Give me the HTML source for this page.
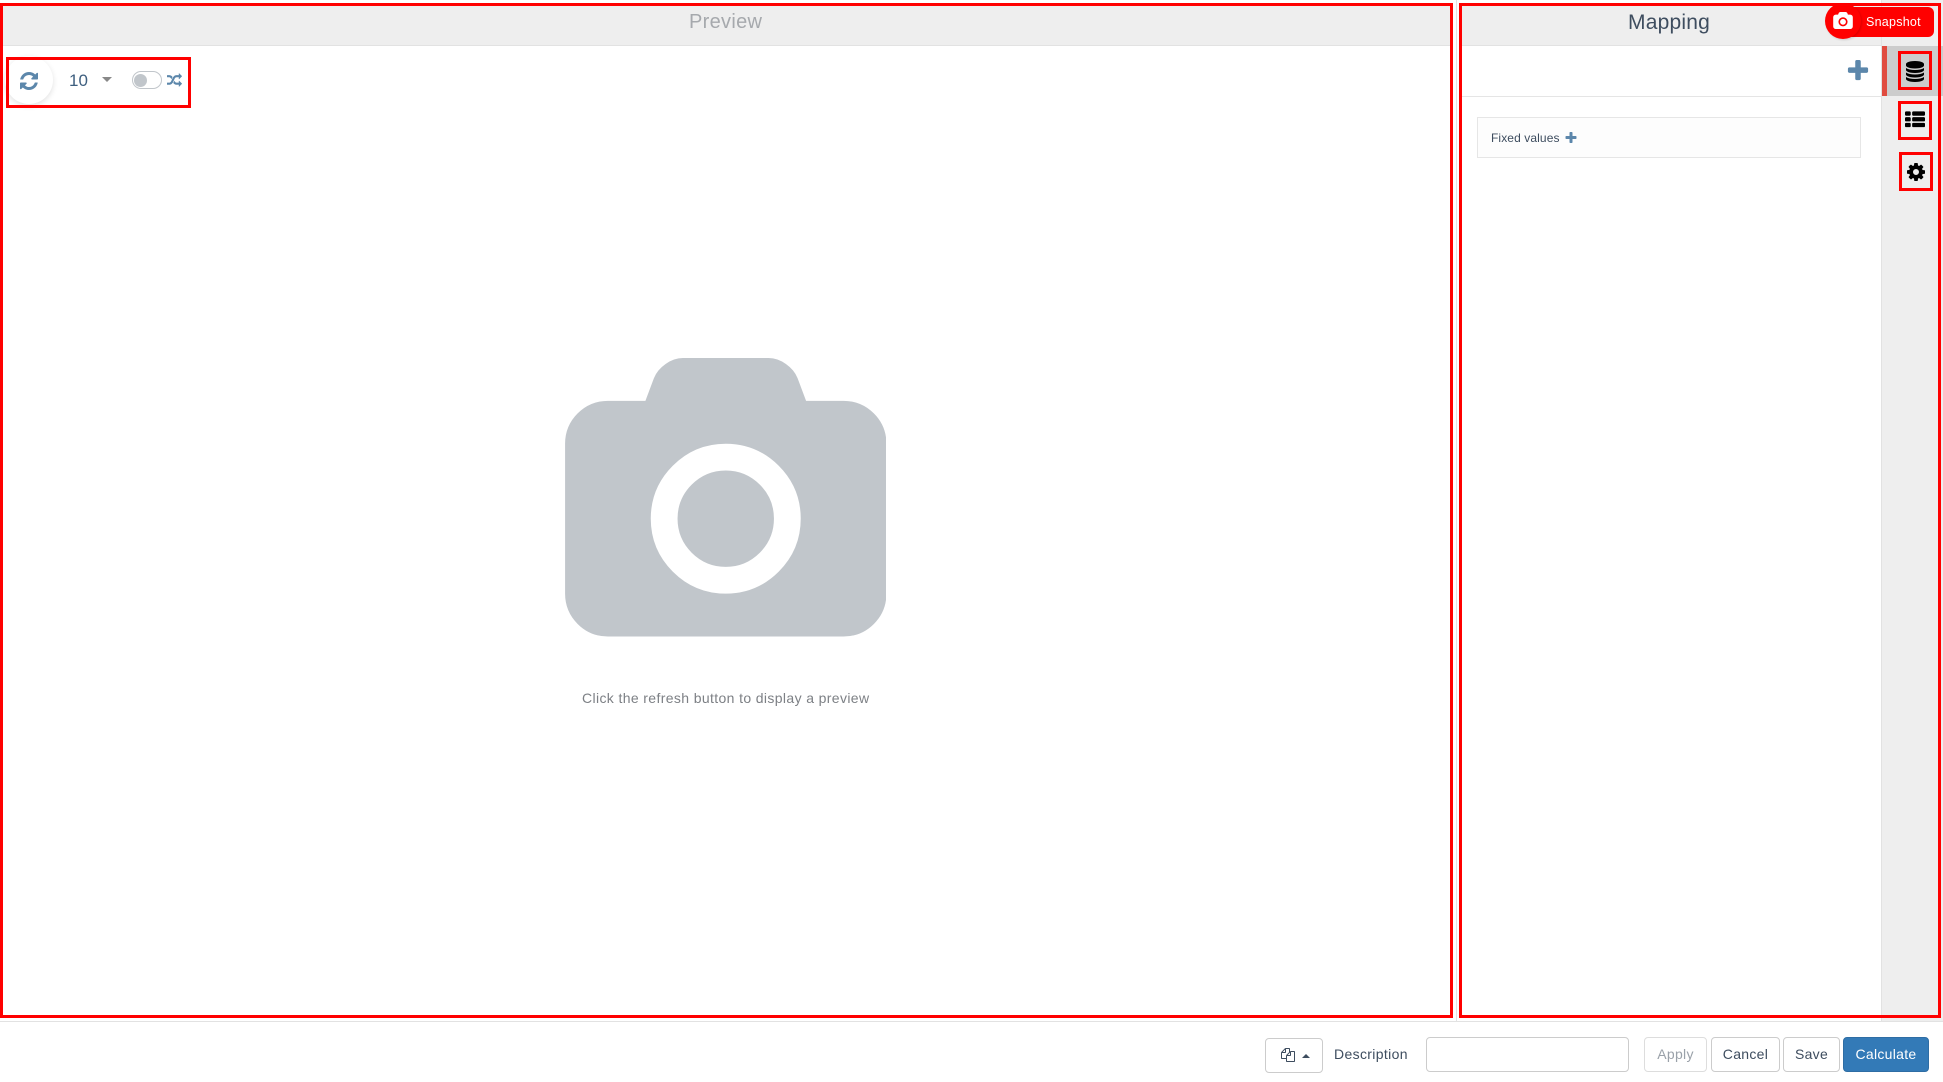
<!DOCTYPE html>
<html><head><meta charset="utf-8"><title>Preview and Mapping</title>
<style>
html,body{margin:0;padding:0;width:1943px;height:1082px;overflow:hidden;background:#fff;font-family:"Liberation Sans",sans-serif;color:#3e4d5f}
div,span,button,input,svg{position:absolute;box-sizing:border-box}
.t{white-space:nowrap;line-height:1}
.red{border:3px solid #f00;background:transparent}
.btn{background:#fff;border:1px solid #ccc;border-radius:4px;font:14px "Liberation Sans",sans-serif;color:#3e4d5f;padding:0 0 2px;top:1037px;height:35px;letter-spacing:.3px}
</style></head><body>

<!-- headers -->
<div style="left:3px;top:6px;width:1447px;height:40px;background:#eee;border-bottom:1px solid #e2e2e2"></div>
<div style="left:1462px;top:6px;width:420px;height:40px;background:#eee;border-bottom:1px solid #e2e2e2"></div>
<div class="t" style="left:689px;top:12px;font-size:20px;letter-spacing:.3px;color:#a6a9ad">Preview</div>
<div class="t" style="left:1628px;top:12px;font-size:21px;letter-spacing:.2px;color:#3e4d5f">Mapping</div>

<!-- preview toolbar -->
<div style="left:5px;top:56px;width:48px;height:48px;border-radius:50%;background:#fff;box-shadow:0 2px 6px rgba(0,0,0,.12)"></div>
<svg style="left:20px;top:72px" width="18" height="18" viewBox="128 128 1536 1536"><path fill="#5c87ab" d="M1639 1056q0 5-1 7-64 268-268 434.500t-478 166.500q-146 0-282.500-55t-243.500-157l-129 129q-19 19-45 19t-45-19-19-45v-448q0-26 19-45t45-19h448q26 0 45 19t19 45-19 45l-137 137q71 66 161 102t187 36q134 0 250-65t186-179q11-17 53-117 8-23 30-23h192q13 0 22.500 9.500t9.500 22.500zm25-800v448q0 26-19 45t-45 19h-448q-26 0-45-19t-19-45 19-45l138-138q-148-137-349-137-134 0-250 65t-186 179q-11 17-53 117-8 23-30 23h-199q-13 0-22.500-9.500t-9.500-22.500v-7q65-268 270-434.500t480-166.500q146 0 284 55.500t245 156.500l130-129q19-19 45-19t45 19 19 45z"/></svg>
<div class="t" style="left:69px;top:72px;font-size:17px;color:#3e5f7f">10</div>
<div style="left:102px;top:77px;width:0;height:0;border-left:5px solid transparent;border-right:5px solid transparent;border-top:5px solid #888"></div>
<div style="left:132px;top:71px;width:30px;height:18px;border-radius:9px;background:#fff;border:1px solid #c1c6cb"></div>
<div style="left:134px;top:73.500px;width:13px;height:13px;border-radius:50%;background:#c1c6cb"></div>
<svg style="left:167px;top:73px" width="15" height="15" viewBox="0 0 1792 1792"><path fill="#5c87ab" d="M666 481q-60 92-137 273-22-45-37-72.500t-40.500-63.500-51-56.500-63-35-81.500-14.500h-224q-14 0-23-9t-9-23v-192q0-14 9-23t23-9h224q250 0 410 225zm1126 799q0 14-9 23l-320 320q-9 9-23 9-13 0-22.500-9.500t-9.500-22.500v-192q-32 0-85 .5t-81 1-73-1-71-5-64-10.500-63-18.500-58-28.500-59-40-55-53.500-56-69.500q59-93 136-273 22 45 37 72.500t40.500 63.500 51 56.500 63 35 81.500 14.500h256v-192q0-14 9-23t23-9q12 0 24 10l319 319q9 9 9 23zm0-896q0 14-9 23l-320 320q-9 9-23 9-13 0-22.500-9.500t-9.500-22.500v-192h-256q-48 0-87 15t-69 45-51 61.500-45 77.500q-32 62-78 171-29 66-49.500 111t-54 105-64 100-74 83-90 68.500-106.500 42-128 16.500h-224q-14 0-23-9t-9-23v-192q0-14 9-23t23-9h224q48 0 87-15t69-45 51-61.500 45-77.500q32-62 78-171 29-66 49.500-111t54-105 64-100 74-83 90-68.500 106.500-42 128-16.500h256v-192q0-14 9-23t23-9q12 0 24 10l319 319q9 9 9 23z"/></svg>

<!-- preview placeholder -->
<svg style="left:564.500px;top:358px" width="321.500" height="278.500" viewBox="-64 0 1920 1664"><path fill="#c1c6cb" d="M896 672q119 0 203.500 84.500t84.500 203.500-84.500 203.500-203.500 84.500-203.500-84.500-84.500-203.500 84.500-203.500 203.500-84.500zm704-416q106 0 181 75t75 181v896q0 106-75 181t-181 75h-1408q-106 0-181-75t-75-181v-896q0-106 75-181t181-75h224l51-136q19-49 69.500-84.500t103.500-35.500h512q53 0 103.500 35.500t69.500 84.500l51 136h224zm-704 1152q185 0 316.500-131.500t131.500-316.500-131.500-316.500-316.500-131.500-316.500 131.500-131.500 316.500 131.500 316.500 316.500 131.500z"/></svg>
<div class="t" style="left:582px;top:691px;font-size:14px;letter-spacing:.37px;color:#7d8085">Click the refresh button to display a preview</div>

<!-- mapping panel -->
<div style="left:1462px;top:96px;width:420px;height:1px;background:#e5e5e5"></div>
<svg style="left:1847px;top:60px" width="22" height="22" viewBox="128 128 1536 1536"><path fill="#5c87ab" d="M1600 736v192q0 40-28 68t-68 28h-416v416q0 40-28 68t-68 28h-192q-40 0-68-28t-28-68v-416h-416q-40 0-68-28t-28-68v-192q0-40 28-68t68-28h416v-416q0-40 28-68t68-28h192q40 0 68 28t28 68v416h416q40 0 68 28t28 68z"/></svg>
<div style="left:1477px;top:117px;width:384px;height:41px;background:#fdfdfd;border:1px solid #e6e6e6"></div>
<div class="t" style="left:1491px;top:132px;font-size:12px;letter-spacing:.1px;color:#3e4d5f">Fixed values</div>
<svg style="left:1565px;top:132px" width="12" height="12" viewBox="128 128 1536 1536"><path fill="#5c87ab" d="M1600 736v192q0 40-28 68t-68 28h-416v416q0 40-28 68t-68 28h-192q-40 0-68-28t-28-68v-416h-416q-40 0-68-28t-28-68v-192q0-40 28-68t68-28h416v-416q0-40 28-68t68-28h192q40 0 68 28t28 68v416h416q40 0 68 28t28 68z"/></svg>

<!-- sidebar -->
<div style="left:1881px;top:0;width:62px;height:1022px;background:#eee;border-left:1px solid #e2e2e2"></div>
<div style="left:1882px;top:46px;width:61px;height:50px;background:#ccc;border-left:5px solid #e04b3f"></div>
<svg style="left:1906px;top:60.500px" width="18" height="21" viewBox="128 0 1536 1792"><path fill="#000" d="M896 768q237 0 443-43t325-127v170q0 69-103 128t-280 93.500-385 34.500-385-34.500-280-93.500-103-128v-170q119 84 325 127t443 43zm0 768q237 0 443-43t325-127v170q0 69-103 128t-280 93.500-385 34.500-385-34.500-280-93.500-103-128v-170q119 84 325 127t443 43zm0-384q237 0 443-43t325-127v170q0 69-103 128t-280 93.500-385 34.500-385-34.500-280-93.500-103-128v-170q119 84 325 127t443 43zm0-1152q208 0 385 34.500t280 93.500 103 128v128q0 69-103 128t-280 93.500-385 34.500-385-34.500-280-93.500-103-128v-128q0-69 103-128t280-93.500 385-34.500z"/></svg>
<svg style="left:1905px;top:110px" width="20" height="20" viewBox="0 0 1792 1792"><path fill="#000" d="M512 1248v192q0 40-28 68t-68 28h-320q-40 0-68-28t-28-68v-192q0-40 28-68t68-28h320q40 0 68 28t28 68zm0-512v192q0 40-28 68t-68 28h-320q-40 0-68-28t-28-68v-192q0-40 28-68t68-28h320q40 0 68 28t28 68zm1280 512v192q0 40-28 68t-68 28h-960q-40 0-68-28t-28-68v-192q0-40 28-68t68-28h960q40 0 68 28t28 68zm-1280-1024v192q0 40-28 68t-68 28h-320q-40 0-68-28t-28-68v-192q0-40 28-68t68-28h320q40 0 68 28t28 68zm1280 512v192q0 40-28 68t-68 28h-960q-40 0-68-28t-28-68v-192q0-40 28-68t68-28h960q40 0 68 28t28 68zm0-512v192q0 40-28 68t-68 28h-960q-40 0-68-28t-28-68v-192q0-40 28-68t68-28h960q40 0 68 28t28 68z"/></svg>
<svg style="left:1906.500px;top:163px" width="18" height="18" viewBox="128 128 1536 1536"><path fill="#000" d="M1152 896q0-106-75-181t-181-75-181 75-75 181 75 181 181 75 181-75 75-181zm512-109v222q0 12-8 23t-20 13l-185 28q-19 54-39 91 35 50 107 138 10 12 10 25t-9 23q-27 37-99 108t-94 71q-12 0-26-9l-138-108q-44 23-91 38-16 136-29 186-7 28-36 28h-222q-14 0-24.500-8.500t-11.500-21.500l-28-184q-49-16-90-37l-141 107q-10 9-25 9-14 0-25-11-126-114-165-168-7-10-7-23 0-12 8-23 15-21 51-66.500t54-70.500q-27-50-41-99l-183-27q-13-2-21-12.500t-8-23.500v-222q0-12 8-23t19-13l186-28q14-46 39-92-40-57-107-138-10-12-10-24 0-10 9-23 26-36 98.500-107.500t94.500-71.500q13 0 26 10l138 107q44-23 91-38 16-136 29-186 7-28 36-28h222q14 0 24.500 8.500t11.500 21.500l28 184q49 16 90 37l142-107q9-9 24-9 13 0 25 10 129 119 165 170 7 8 7 22 0 12-8 23-15 21-51 66.500t-54 70.500q26 50 41 98l183 28q13 2 21 12.500t8 23.500z"/></svg>

<!-- bottom divider -->
<div style="left:0;top:1021px;width:1943px;height:1px;background:#e2e2e2"></div>
<div style="left:1456px;top:0;width:1px;height:1022px;background:#e2e2e2"></div>

<!-- red annotation frames -->
<div class="red" style="left:0;top:3px;width:1453px;height:1015px"></div>
<div class="red" style="left:1459px;top:3px;width:482px;height:1015px"></div>
<div class="red" style="left:6px;top:57px;width:185px;height:51px"></div>
<div class="red" style="left:1898px;top:51px;width:34px;height:39px"></div>
<div class="red" style="left:1898px;top:101px;width:34px;height:39px"></div>
<div class="red" style="left:1899px;top:152px;width:34px;height:39px"></div>

<!-- snapshot -->
<div style="left:1843px;top:7px;width:91px;height:30px;background:#f00;border-radius:6px"></div>
<div style="left:1825px;top:3px;width:36px;height:36px;border-radius:50%;background:#f00;box-shadow:1px 1px 2px rgba(0,0,0,.15)"></div>
<svg style="left:1833px;top:12px" width="20" height="17" viewBox="-64 0 1920 1664"><path fill="#fff" d="M896 672q119 0 203.500 84.500t84.500 203.500-84.500 203.500-203.500 84.500-203.500-84.500-84.500-203.500 84.500-203.500 203.500-84.500zm704-416q106 0 181 75t75 181v896q0 106-75 181t-181 75h-1408q-106 0-181-75t-75-181v-896q0-106 75-181t181-75h224l51-136q19-49 69.500-84.500t103.500-35.500h512q53 0 103.500 35.500t69.500 84.500l51 136h224zm-704 1152q185 0 316.500-131.500t131.500-316.500-131.500-316.500-316.500-131.500-316.500 131.500-131.500 316.500 131.500 316.500 316.500 131.500z"/></svg>
<div class="t" style="left:1866px;top:16px;font-size:12.500px;letter-spacing:.25px;color:#fff">Snapshot</div>

<!-- footer -->
<button class="btn" style="left:1265px;top:1038px;width:58px"></button>
<svg style="left:1281px;top:1048px" width="14" height="14" viewBox="0 0 1792 1792"><path fill="#3e4d5f" d="M1696 384q40 0 68 28t28 68v1216q0 40-28 68t-68 28h-960q-40 0-68-28t-28-68v-288h-544q-40 0-68-28t-28-68v-672q0-40 20-88t48-76l408-408q28-28 76-48t88-20h416q40 0 68 28t28 68v328q68-40 128-40h416zm-544 213l-299 299h299v-299zm-640-384l-299 299h299v-299zm196 647l316-316v-416h-384v416q0 40-28 68t-68 28h-416v640h512v-256q0-40 20-88t48-76zm956 804v-1152h-384v416q0 40-28 68t-68 28h-416v640h896z"/></svg>
<div style="left:1302px;top:1054px;width:0;height:0;border-left:4px solid transparent;border-right:4px solid transparent;border-bottom:4px solid #3e4d5f"></div>
<div class="t" style="left:1334px;top:1047px;font-size:14px;letter-spacing:.35px">Description</div>
<input type="text" style="left:1426px;top:1037px;width:203px;height:35px;border:1px solid #ccc;border-radius:4px;background:#fff">
<button class="btn" style="left:1644px;width:63px;color:#9aa1a9;border-color:#ddd">Apply</button>
<button class="btn" style="left:1711px;width:69px">Cancel</button>
<button class="btn" style="left:1783px;width:57px">Save</button>
<button class="btn" style="left:1843px;width:86px;background:#337ab7;border-color:#2e6da4;color:#fff">Calculate</button>
</body></html>
